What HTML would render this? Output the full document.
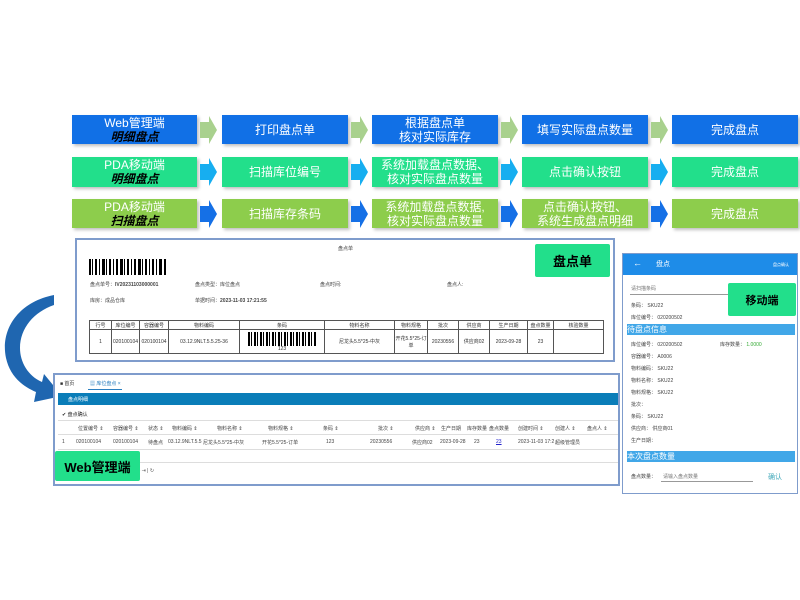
<!DOCTYPE html>
<html><head><meta charset="utf-8"><style>
*{margin:0;padding:0;box-sizing:border-box}
body{width:800px;height:600px;background:#fff;position:relative;overflow:hidden;font-family:"Liberation Sans","Noto Sans CJK SC",sans-serif}
.b{position:absolute;color:#fff;font-size:12px;display:flex;flex-direction:column;align-items:center;justify-content:center;text-align:center;line-height:14px;box-shadow:2px 2px 3px rgba(0,0,0,.25)}
.r1{background:#1170e6}.r2{background:#22df8b}.r3{background:#8dcd4c}
.b i{color:#000;font-weight:bold;font-style:italic}
.ar{position:absolute;width:17px;height:28px}
.abs{position:absolute}
.t{position:absolute;font-size:5px;color:#444;white-space:nowrap}
table{border-collapse:collapse}
.lbl{position:absolute;background:#22df8b;color:#000;font-weight:bold;display:flex;align-items:center;justify-content:center;border-radius:2px}
</style></head><body>

<!-- row 1 -->
<div class="b r1" style="left:72px;top:115px;width:125px;height:29px"><span>Web管理端</span><i>明细盘点</i></div>
<div class="b r1" style="left:222px;top:115px;width:126px;height:29px">打印盘点单</div>
<div class="b r1" style="left:372px;top:115px;width:126px;height:29px"><span>根据盘点单</span><span>核对实际库存</span></div>
<div class="b r1" style="left:522px;top:115px;width:126px;height:29px">填写实际盘点数量</div>
<div class="b r1" style="left:672px;top:115px;width:126px;height:29px">完成盘点</div>
<!-- row 2 -->
<div class="b r2" style="left:72px;top:157px;width:125px;height:30px"><span>PDA移动端</span><i>明细盘点</i></div>
<div class="b r2" style="left:222px;top:157px;width:126px;height:30px">扫描库位编号</div>
<div class="b r2" style="left:372px;top:157px;width:126px;height:30px"><span>系统加载盘点数据、</span><span>核对实际盘点数量</span></div>
<div class="b r2" style="left:522px;top:157px;width:126px;height:30px">点击确认按钮</div>
<div class="b r2" style="left:672px;top:157px;width:126px;height:30px">完成盘点</div>
<!-- row 3 -->
<div class="b r3" style="left:72px;top:199px;width:125px;height:29px"><span>PDA移动端</span><i>扫描盘点</i></div>
<div class="b r3" style="left:222px;top:199px;width:126px;height:29px">扫描库存条码</div>
<div class="b r3" style="left:372px;top:199px;width:126px;height:29px"><span>系统加载盘点数据,</span><span>核对实际盘点数量</span></div>
<div class="b r3" style="left:522px;top:199px;width:126px;height:29px"><span>点击确认按钮、</span><span>系统生成盘点明细</span></div>
<div class="b r3" style="left:672px;top:199px;width:126px;height:29px">完成盘点</div>

<!-- arrows -->
<svg class="abs" style="left:0;top:0" width="800" height="240">
<defs><path id="a" d="M0 6 L9 6 L9 0 L17 14 L9 28 L9 22 L0 22 Z"/></defs>
<g fill="#a9d18e"><use href="#a" x="200" y="116"/><use href="#a" x="351" y="116"/><use href="#a" x="501" y="116"/><use href="#a" x="651" y="116"/></g>
<g fill="#17aef0"><use href="#a" x="200" y="158"/><use href="#a" x="351" y="158"/><use href="#a" x="501" y="158"/><use href="#a" x="651" y="158"/></g>
<g fill="#1570e6"><use href="#a" x="200" y="200"/><use href="#a" x="351" y="200"/><use href="#a" x="501" y="200"/><use href="#a" x="651" y="200"/></g>
</svg>

<!-- curved arrow -->
<svg class="abs" style="left:0;top:290px" width="110" height="120">
<path d="M54 5 C18 12 0 40 6 68 C10 86 22 96 36 102 L34 112 L62 106 L44 84 L42 92 C28 86 20 72 20 58 C20 38 34 22 54 15 Z" fill="#1f66b0"/>
</svg>

<!-- 盘点单 doc -->
<div class="abs" style="left:75px;top:238px;width:540px;height:124px;border:2px solid #7f9ccc;background:#fff"></div>
<div class="t" style="left:338px;top:245px">盘点单</div>
<svg class="abs" style="left:89px;top:259px" width="80" height="16"><g fill="#000">
<rect x="0" y="0" width="2" height="16"/><rect x="3" y="0" width="1" height="16"/><rect x="6" y="0" width="2" height="16"/><rect x="10" y="0" width="1" height="16"/><rect x="13" y="0" width="3" height="16"/><rect x="17" y="0" width="1" height="16"/><rect x="20" y="0" width="2" height="16"/><rect x="24" y="0" width="1" height="16"/><rect x="27" y="0" width="2" height="16"/><rect x="31" y="0" width="3" height="16"/><rect x="35" y="0" width="1" height="16"/><rect x="38" y="0" width="2" height="16"/><rect x="42" y="0" width="1" height="16"/><rect x="45" y="0" width="2" height="16"/><rect x="49" y="0" width="3" height="16"/><rect x="53" y="0" width="1" height="16"/><rect x="56" y="0" width="2" height="16"/><rect x="60" y="0" width="1" height="16"/><rect x="63" y="0" width="2" height="16"/><rect x="67" y="0" width="1" height="16"/><rect x="70" y="0" width="3" height="16"/><rect x="75" y="0" width="2" height="16"/></g></svg>
<div class="t" style="left:90px;top:281px">盘点单号：<b>IV20231103000001</b></div>
<div class="t" style="left:195px;top:281px">盘点类型：库位盘点</div>
<div class="t" style="left:320px;top:281px">盘点时间:</div>
<div class="t" style="left:447px;top:281px">盘点人:</div>
<div class="t" style="left:90px;top:297px">库房：成品仓库</div>
<div class="t" style="left:195px;top:297px">单据时间：<b>2023-11-03 17:21:55</b></div>
<table class="abs" style="left:89px;top:320px;width:515px;font-size:5px;color:#333;text-align:center">
<tr style="height:9px"><td style="border:1px solid #555;width:22px">行号</td><td style="border:1px solid #555;width:28px">库位编号</td><td style="border:1px solid #555;width:29px">容器编号</td><td style="border:1px solid #555;width:71px">物料编码</td><td style="border:1px solid #555;width:85px">条码</td><td style="border:1px solid #555;width:70px">物料名称</td><td style="border:1px solid #555;width:33px">物料规格</td><td style="border:1px solid #555;width:31px">批次</td><td style="border:1px solid #555;width:31px">供应商</td><td style="border:1px solid #555;width:38px">生产日期</td><td style="border:1px solid #555;width:26px">盘点数量</td><td style="border:1px solid #555">核验数量</td></tr>
<tr style="height:24px"><td style="border:1px solid #555">1</td><td style="border:1px solid #555">020100104</td><td style="border:1px solid #555">020100104</td><td style="border:1px solid #555">03.12.9NLT.5.5.25-36</td><td style="border:1px solid #555"><div style="height:14px;margin:0 8px;background:repeating-linear-gradient(90deg,#000 0 2px,#fff 2px 3px,#000 3px 4px,#fff 4px 6px)"></div>123</td><td style="border:1px solid #555">尼龙头5.5*25-中灰</td><td style="border:1px solid #555">开花5.5*25-订单</td><td style="border:1px solid #555">20230556</td><td style="border:1px solid #555">供应商02</td><td style="border:1px solid #555">2023-09-28</td><td style="border:1px solid #555">23</td><td style="border:1px solid #555"></td></tr>
</table>
<div class="lbl" style="left:535px;top:244px;width:75px;height:33px;font-size:13px">盘点单</div>

<!-- web panel -->
<div class="abs" style="left:53px;top:373px;width:567px;height:113px;border:2px solid #7f9ccc;background:#fff"></div>
<div class="t" style="left:60px;top:380px;color:#333">■ 首页</div>
<div class="t" style="left:90px;top:380px;color:#2a7fc0">▦ 库位盘点 ×</div>
<div class="abs" style="left:88px;top:389px;width:34px;height:1px;background:#2a7fc0"></div>
<div class="abs" style="left:58px;top:393px;width:560px;height:12px;background:#0a7db8"></div>
<div class="t" style="left:68px;top:396px;color:#fff">盘点明细</div>
<div class="t" style="left:62px;top:411px;color:#222">✔ 盘点确认</div>
<div class="abs" style="left:58px;top:420px;width:560px;height:1px;background:#ddd"></div>
<div class="abs" style="left:58px;top:434px;width:560px;height:1px;background:#ddd"></div>
<div class="abs" style="left:58px;top:449px;width:560px;height:1px;background:#ddd"></div>
<div class="t" style="left:78px;top:425px">位置编号 ⇕</div><div class="t" style="left:113px;top:425px">容器编号 ⇕</div><div class="t" style="left:148px;top:425px">状态 ⇕</div><div class="t" style="left:172px;top:425px">物料编码 ⇕</div><div class="t" style="left:217px;top:425px">物料名称 ⇕</div><div class="t" style="left:268px;top:425px">物料规格 ⇕</div><div class="t" style="left:323px;top:425px">条码 ⇕</div><div class="t" style="left:378px;top:425px">批次 ⇕</div><div class="t" style="left:415px;top:425px">供应商 ⇕</div><div class="t" style="left:441px;top:425px">生产日期</div><div class="t" style="left:467px;top:425px">库存数量</div><div class="t" style="left:489px;top:425px">盘点数量</div><div class="t" style="left:518px;top:425px">创建时间 ⇕</div><div class="t" style="left:555px;top:425px">创建人 ⇕</div><div class="t" style="left:587px;top:425px">盘点人 ⇕</div>
<div class="t" style="left:62px;top:439px">1</div><div class="t" style="left:76px;top:439px">020100104</div><div class="t" style="left:113px;top:439px">020100104</div><div class="t" style="left:148px;top:439px">待盘点</div><div class="t" style="left:168px;top:439px">03.12.9NLT.5.5</div><div class="t" style="left:203px;top:439px">尼龙头5.5*25-中灰</div><div class="t" style="left:262px;top:439px">开花5.5*25-订单</div><div class="t" style="left:326px;top:439px">123</div><div class="t" style="left:370px;top:439px">20230556</div><div class="t" style="left:412px;top:439px">供应商02</div><div class="t" style="left:440px;top:439px">2023-09-28</div><div class="t" style="left:474px;top:439px">23</div><div class="t" style="left:496px;top:439px;color:#22c;text-decoration:underline">23</div><div class="t" style="left:518px;top:439px">2023-11-03 17:2</div><div class="t" style="left:555px;top:439px">超级管理员</div>
<div class="abs" style="left:58px;top:462px;width:560px;height:1px;background:#ddd"></div>
<div class="t" style="left:135px;top:468px;color:#555">| ▸ ⇥ | ↻</div>
<div class="lbl" style="left:55px;top:451px;width:85px;height:30px;font-size:13px">Web管理端</div>

<!-- mobile -->
<div class="abs" style="left:622px;top:253px;width:176px;height:241px;border:1px solid #7f9ccc;background:#fff"></div>
<div class="abs" style="left:623px;top:254px;width:174px;height:21px;background:#1e8ce8"></div>
<div class="abs" style="left:633px;top:258px;color:#fff;font-size:9px">←</div>
<div class="abs" style="left:656px;top:259px;color:#fff;font-size:7px">盘点</div>
<div class="abs" style="left:773px;top:262px;color:#fff;font-size:4px">盘点确认</div>
<div class="t" style="left:631px;top:285px;color:#777">请扫描条码</div>
<div class="abs" style="left:630px;top:294px;width:100px;height:1px;background:#999"></div>
<div class="t" style="left:631px;top:302px">条码： SKU22</div>
<div class="t" style="left:631px;top:314px">库位编号： 020200502</div>
<div class="abs" style="left:627px;top:324px;width:168px;height:11px;background:#41a7e8;color:#fff;font-size:8px;line-height:11px">待盘点信息</div>
<div class="t" style="left:631px;top:341px">库位编号： 020200502</div><div class="t" style="left:720px;top:341px">库存数量： <span style="color:#3a3">1.0000</span></div>
<div class="t" style="left:631px;top:353px">容器编号： A0006</div>
<div class="t" style="left:631px;top:365px">物料编码： SKU22</div>
<div class="t" style="left:631px;top:377px">物料名称： SKU22</div>
<div class="t" style="left:631px;top:389px">物料规格： SKU22</div>
<div class="t" style="left:631px;top:401px">批次：</div>
<div class="t" style="left:631px;top:413px">条码： SKU22</div>
<div class="t" style="left:631px;top:425px">供应商： 供应商01</div>
<div class="t" style="left:631px;top:437px">生产日期：</div>
<div class="abs" style="left:627px;top:451px;width:168px;height:11px;background:#41a7e8;color:#fff;font-size:8px;line-height:11px">本次盘点数量</div>
<div class="t" style="left:631px;top:473px">盘点数量：</div><div class="t" style="left:663px;top:473px;color:#777">请输入盘点数量</div>
<div class="abs" style="left:661px;top:481px;width:92px;height:1px;background:#999"></div>
<div class="abs" style="left:768px;top:472px;color:#4ab;font-size:7px">确认</div>
<div class="lbl" style="left:728px;top:283px;width:68px;height:33px;font-size:11px">移动端</div>
</body></html>
